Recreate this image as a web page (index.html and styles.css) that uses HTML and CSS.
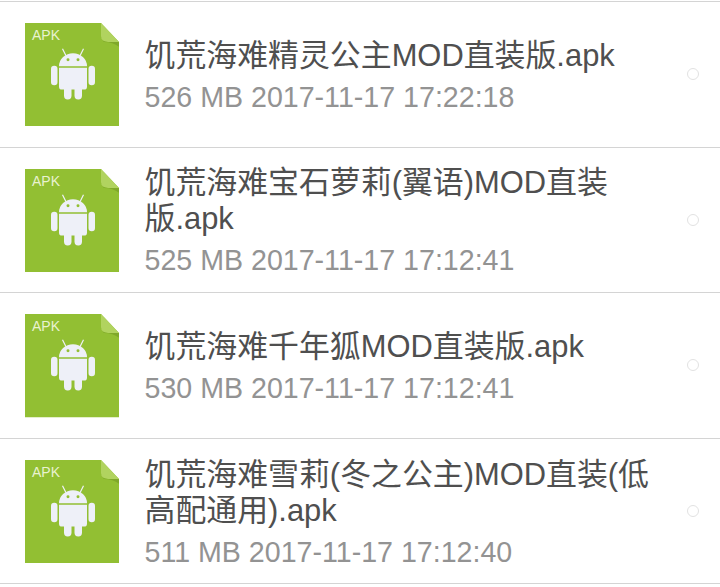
FILE: index.html
```html
<!DOCTYPE html>
<html lang="zh-CN">
<head>
<meta charset="utf-8">
<title>APK</title>
<link rel="stylesheet" href="styles.css">
</head>
<body>
<svg class="defs" width="0" height="0" aria-hidden="true">
  <symbol id="apk" viewBox="0 0 94 104" preserveAspectRatio="none">
    <path d="M0 0H76L94 19V104H0Z" fill="#92bf33"/>
    <path d="M76 0L94 19H83Q76 19 76 13Z" fill="#b1d35f"/>
    <path d="M76 13Q76 19 83 19H94V24Q88 19 79 19Q76 17 76 13Z" fill="#7fa82a"/>
    <g fill="#eef0f8">
      <path d="M34 43.500A14 13 0 0 1 62 43.500Z"/>
      <path d="M34 45H62V64Q62 67 59 67H37Q34 67 34 64Z"/>
      <rect x="26" y="43" width="6.500" height="19.500" rx="3.200"/>
      <rect x="63.500" y="43" width="6.500" height="19.500" rx="3.200"/>
      <rect x="39" y="62" width="7.500" height="15" rx="3.700"/>
      <rect x="49.500" y="62" width="7.500" height="15" rx="3.700"/>
    </g>
    <path d="M37.500 26L41 33M58.500 26L55 33" stroke="#eef0f8" stroke-width="1.200"/>
    <circle cx="43" cy="37" r="1.500" fill="#92bf33"/>
    <circle cx="53" cy="37" r="1.500" fill="#92bf33"/>
  </symbol>
</svg>
<main class="list">
  <article class="row">
    <div class="icon"><svg class="glyph"><use href="#apk"/></svg><span class="tag">APK</span></div>
    <div class="info">
      <div class="name">饥荒海难精灵公主MOD直装版.apk</div>
      <div class="meta">526 MB 2017-11-17 17:22:18</div>
    </div>
    <span class="radio"></span>
  </article>
  <article class="row">
    <div class="icon"><svg class="glyph"><use href="#apk"/></svg><span class="tag">APK</span></div>
    <div class="info">
      <div class="name">饥荒海难宝石萝莉(翼语)MOD直装<br>版.apk</div>
      <div class="meta">525 MB 2017-11-17 17:12:41</div>
    </div>
    <span class="radio"></span>
  </article>
  <article class="row">
    <div class="icon"><svg class="glyph"><use href="#apk"/></svg><span class="tag">APK</span></div>
    <div class="info">
      <div class="name">饥荒海难千年狐MOD直装版.apk</div>
      <div class="meta">530 MB 2017-11-17 17:12:41</div>
    </div>
    <span class="radio"></span>
  </article>
  <article class="row">
    <div class="icon"><svg class="glyph"><use href="#apk"/></svg><span class="tag">APK</span></div>
    <div class="info">
      <div class="name">饥荒海难雪莉(冬之公主)MOD直装(低<br>高配通用).apk</div>
      <div class="meta">511 MB 2017-11-17 17:12:40</div>
    </div>
    <span class="radio"></span>
  </article>
</main>
</body>
</html>
```
FILE: styles.css
```css
html, body {
  margin: 0;
  padding: 0;
  background: #fff;
}
body {
  width: 720px;
  height: 587px;
  overflow: hidden;
  font-family: "Liberation Sans", "Noto Sans CJK SC", sans-serif;
}
.defs {
  display: block;
  height: 0;
}
.list {
  display: flex;
  flex-direction: column;
  padding-top: 1px;
}
.row {
  box-sizing: border-box;
  height: 145.6px;
  display: flex;
  align-items: center;
  padding: 0 21px 0 25px;
  border-top: 1px solid #d4d4d4;
}
.row:last-child {
  height: 146.6px;
  border-bottom: 1px solid #d4d4d4;
}
.icon {
  position: relative;
  flex: none;
  width: 94px;
  height: 103.4px;
  margin-top: 1px;
}
.glyph {
  display: block;
  width: 94px;
  height: 103.4px;
}
.tag {
  position: absolute;
  left: 7px;
  top: 4px;
  font-size: 14px;
  line-height: 16px;
  color: #e9f2d0;
}
.info {
  flex: 1;
  padding: 3px 0 0 25.5px;
}
.name {
  font-size: 30.9px;
  line-height: 36px;
  color: #4f4f4f;
  white-space: nowrap;
}
.meta {
  margin-top: 6px;
  font-size: 28.6px;
  line-height: 34px;
  color: #939393;
  white-space: nowrap;
}
.radio {
  flex: none;
  box-sizing: border-box;
  width: 12px;
  height: 12px;
  border: 1.500px solid #e2e2e2;
  border-radius: 50%;
}
```
